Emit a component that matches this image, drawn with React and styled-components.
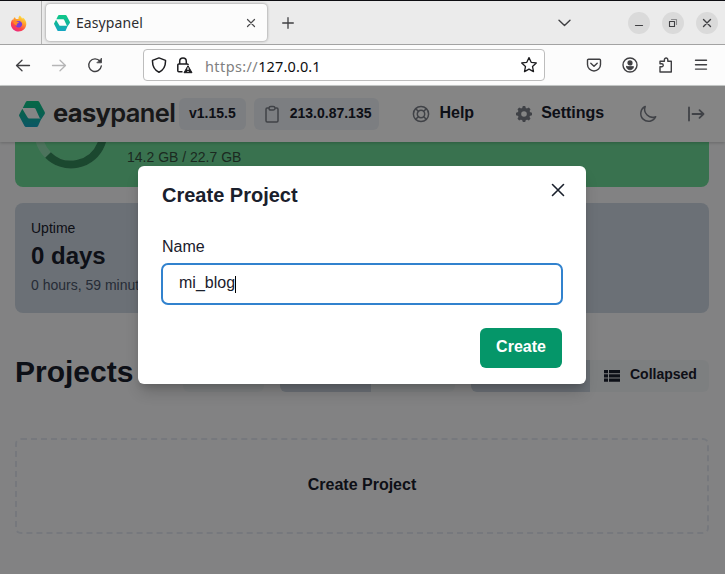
import React from "react";
import styled, { createGlobalStyle } from "styled-components";

const Global = createGlobalStyle`
  *, *::before, *::after { box-sizing: border-box; }
  body { margin: 0; overflow: hidden; background: #f9fafb; }
  p, h1, h2 { margin: 0; }
  svg { display: block; flex: none; }
  button { border: 0; padding: 0; margin: 0; background: none; font: inherit; color: inherit; }
`;

const Window = styled.div`
  width: 725px;
  height: 574px;
  display: flex;
  flex-direction: column;
  overflow: hidden;
  font-family: "Liberation Sans", Arial, sans-serif;
  color: #1a202c;
`;

/* ---------- browser chrome ---------- */
const TabStrip = styled.div`
  height: 45px;
  flex: none;
  display: flex;
  align-items: center;
  background: #ebebeb;
  border-top: 1px solid #0d0d12;
  border-bottom: 1px solid #a3a3a3;
  font-family: "Noto Sans", "Open Sans", sans-serif;
  color: #3b3b3d;
`;
const PinnedTab = styled.div`
  width: 42px;
  height: 43px;
  padding: 2px 0 0 10px;
  display: flex;
  align-items: center;
  border-right: 1px solid #b4b4b4;
`;
const Tab = styled.div`
  width: 221px;
  height: 37px;
  margin-left: 4px;
  padding: 0 9px 0 8px;
  display: flex;
  align-items: center;
  background: #fcfcfc;
  border-radius: 4px;
  box-shadow: 0 0 3px rgba(0, 0, 0, 0.45);
`;
const TabTitle = styled.span`
  flex: 1;
  margin-left: 6px;
  padding-top: 1px;
  font-size: 14px;
  line-height: 20px;
  letter-spacing: 0.08px;
  color: #2e2e31;
`;
const NewTab = styled.button`
  margin-left: 15px;
`;
const WindowControls = styled.div`
  margin-left: auto;
  margin-right: 7px;
  display: flex;
  align-items: center;
  gap: 12px;
`;
const TabsMenu = styled.div`
  margin-right: 45px;
`;
const RoundControl = styled.button`
  width: 22px;
  height: 22px;
  border-radius: 50%;
  background: #dadada;
  display: grid;
  place-items: center;
`;
const Toolbar = styled.div`
  height: 41px;
  flex: none;
  display: flex;
  align-items: center;
  padding: 0 17px 0 15px;
  background: #fcfcfc;
  border-bottom: 1px solid #c9cccb;
`;
const NavButtons = styled.div`
  display: flex;
  gap: 20px;
  width: 128px;
`;
const UrlBar = styled.div`
  width: 402px;
  height: 32px;
  display: flex;
  align-items: center;
  padding: 0 6px 0 7px;
  border: 1px solid #bdbdbd;
  border-radius: 4px;
  background: #fff;
`;
const SecurityIcons = styled.div`
  display: flex;
  align-items: center;
  gap: 8px;
`;
const UrlText = styled.span`
  flex: 1;
  margin-left: 11px;
  padding-top: 1px;
  font-family: "Noto Sans", "Open Sans", sans-serif;
  font-size: 14.5px;
  line-height: 20px;
  letter-spacing: 0.13px;
  color: #0c0c0e;
`;
const UrlScheme = styled.span`
  color: #7f7f81;
  letter-spacing: 0.4px;
`;
const ToolbarActions = styled.div`
  margin-left: auto;
  display: flex;
  align-items: center;
  gap: 20px;
`;

/* ---------- page ---------- */
const Viewport = styled.div`
  position: relative;
  flex: 1;
  min-height: 0;
  display: flex;
  flex-direction: column;
  background: #f9fafb;
`;
const AppHeader = styled.header`
  position: relative;
  z-index: 1;
  height: 56px;
  flex: none;
  display: flex;
  align-items: center;
  padding: 0 19px;
  background: #fff;
  box-shadow: 0 1px 3px rgba(0, 0, 0, 0.2);
`;
const Wordmark = styled.span`
  width: 126px;
  padding-left: 8px;
  margin-top: -2px;
  font-family: Inter, sans-serif;
  font-size: 25.5px;
  line-height: 32px;
  font-weight: 700;
  letter-spacing: -0.65px;
  white-space: nowrap;
  color: #2e2e30;
`;
const WordmarkLight = styled.span`
  font-weight: 600;
`;
const Pill = styled.div`
  height: 32px;
  margin-left: ${(p) => p.$gap}px;
  padding: 0 ${(p) => p.$right}px 2px 10px;
  display: flex;
  align-items: center;
  gap: 10px;
  border-radius: 6px;
  background: #edf2f7;
  font-size: 14px;
  font-weight: 700;
  white-space: nowrap;
  svg { margin-top: 2px; }
`;
const HeaderLink = styled.a`
  margin-left: ${(p) => p.$gap}px;
  padding-bottom: 2px;
  display: flex;
  align-items: center;
  gap: 9px;
  font-size: 16px;
  font-weight: 700;
  svg { margin-top: 2px; }
`;
const HeaderIcon = styled.button`
  margin-left: ${(p) => p.$gap}px;
`;
const Content = styled.main`
  padding: 0 16px 0 15px;
  display: flex;
  flex-direction: column;
`;
const UsageCard = styled.section`
  height: 45px;
  display: flex;
  padding-left: 20px;
  border-radius: 0 0 8px 8px;
  background: #6ddb97;
  overflow: hidden;
`;
const UsageText = styled.p`
  margin: 7px 0 0 20px;
  font-size: 14px;
  line-height: 16px;
  color: #35503f;
`;
const UptimeCard = styled.section`
  height: 110px;
  margin-top: 16px;
  padding: 17px 16px;
  border-radius: 8px;
  background: #cdd7e3;
`;
const StatLabel = styled.p`
  font-size: 14px;
  line-height: 17px;
`;
const StatValue = styled.p`
  margin-top: 2px;
  font-size: 24px;
  line-height: 34px;
  font-weight: 700;
`;
const StatHelp = styled.p`
  margin-top: 4px;
  font-size: 14px;
  line-height: 16px;
  color: #4a5568;
`;
const ProjectsBar = styled.div`
  height: 32px;
  margin-top: 47px;
  display: flex;
  align-items: center;
`;
const Heading = styled.h1`
  width: 168px;
  padding-bottom: 8px;
  font-size: 30px;
  line-height: 36px;
`;
const ButtonGroup = styled.div`
  margin-right: ${(p) => p.$gap || 0}px;
  display: flex;
  border-radius: 6px;
  overflow: hidden;
`;
const ToolButton = styled.button`
  width: ${(p) => p.$width}px;
  height: 32px;
  padding-left: 14px;
  display: flex;
  align-items: center;
  gap: 10px;
  background: ${(p) => (p.$active ? "#cbd5e0" : "#f0f3f6")};
  font-size: 14px;
  font-weight: 700;
`;
const ButtonLabel = styled.span`
  padding-bottom: 4px;
`;
const EmptyProjects = styled.div`
  height: 96px;
  margin-top: 46px;
  padding-bottom: 3px;
  display: grid;
  place-items: center;
  border: 2px dashed #e2e6f0;
  border-radius: 6px;
  font-size: 16px;
  font-weight: 700;
`;

/* ---------- dialog ---------- */
const Overlay = styled.div`
  position: absolute;
  inset: 0;
  z-index: 2;
  display: flex;
  justify-content: center;
  align-items: flex-start;
  padding: 80px 1px 0 0;
  background: rgba(0, 0, 0, 0.48);
`;
const Dialog = styled.div`
  width: 448px;
  height: 218px;
  display: flex;
  flex-direction: column;
  padding: 14px 24px 16px;
  border-radius: 6px;
  background: #fff;
  box-shadow: 0 10px 15px -3px rgba(0, 0, 0, 0.2), 0 4px 6px -2px rgba(0, 0, 0, 0.12);
`;
const DialogHeader = styled.div`
  display: flex;
  justify-content: space-between;
  margin-right: -3px;
`;
const DialogTitle = styled.h2`
  font-size: 20px;
  line-height: 30px;
`;
const Field = styled.label`
  margin-top: 25px;
  font-size: 16px;
  line-height: 23px;
`;
const Input = styled.div`
  width: 402px;
  height: 42px;
  margin: 5px -1px 0;
  padding: 0 16px 3px;
  display: flex;
  align-items: center;
  border: 2px solid #3182ce;
  border-radius: 7px;
  font-size: 16px;
`;
const Caret = styled.span`
  width: 1px;
  height: 17px;
  margin-top: 4px;
  background: #000;
`;
const SubmitButton = styled.button`
  align-self: flex-end;
  flex: none;
  width: 82px;
  height: 40px;
  margin-top: 23px;
  padding-bottom: 3px;
  border-radius: 6px;
  background: #059669;
  color: #fff;
  font-size: 16px;
  font-weight: 700;
`;

/* ---------- icons ---------- */
const Icon = ({ w = 16, h = w, color = "#3f3f42", sw = 1.3, children }) => (
  <svg width={w} height={h} viewBox={`0 0 ${w} ${h}`} fill="none" stroke={color} strokeWidth={sw} strokeLinecap="round" strokeLinejoin="round">
    {children}
  </svg>
);

const FirefoxLogo = () => (
  <svg width="17" height="17" viewBox="0 0 17 17">
    <defs>
      <linearGradient id="fox" x1="0.8" y1="0" x2="0.25" y2="1">
        <stop offset="0" stopColor="#fff04a" />
        <stop offset="0.35" stopColor="#ffa62b" />
        <stop offset="0.7" stopColor="#ff4545" />
        <stop offset="1" stopColor="#e8248a" />
      </linearGradient>
    </defs>
    <path d="M9.8.5C11 1.4 11.7 2.6 12 3.6c.6-.2.7-.7.8-1.200C15 4 16.500 6.300 16.300 9.300 16 13.500 12.700 16.500 8.600 16.500S.9 13.300.9 9.200c0-2.100.6-3.700 1.600-5 .1.500.3.900.6 1.200C3.200 4 3.900 2.700 5 2c0 .8.300 1.500 1 2 1-.1 1.800-.1 2.500.1C8.400 2.700 8.800 1.400 9.800.5z" fill="url(#fox)" />
    <path d="M5 7.500c1.200-1.500 3.200-2 5-1.200 1.800.7 2.600 2.600 1.900 4.300-.7 1.600-2.500 2.300-4 1.900C6 12 5 10.200 5.300 8.700l2.300-.4z" fill="#7a3bd8" />
    <path d="M3.200 6.500c1.400-.9 3-.6 4.200.3l1.600.3c-.2.900-1 1.200-1.700 1.500-.7.400-.8 1.300 0 1.700-1.700.5-3.600-1-4.100-3.800z" fill="#ff8a24" />
  </svg>
);

const PanelLogo = ({ size, id }) => (
  <svg width={size} height={size} viewBox="0 0 26 26">
    <defs>
      <linearGradient id={id} x1="0" y1="0" x2="0" y2="26" gradientUnits="userSpaceOnUse">
        <stop offset="0" stopColor="#0fc888" />
        <stop offset="0.45" stopColor="#10b996" />
        <stop offset="1" stopColor="#15a6c4" />
      </linearGradient>
    </defs>
    <path fill={`url(#${id})`} d="M8.200 0h10.600q1 0 1.500.9l5.400 10.200q.4.900 0 1.800l-3.500 5.300L20.700 17l-4.100-8.900q-.5-1-1.500-1H3.800l3-6.200Q7.300 0 8.200 0z" />
    <path fill={`url(#${id})`} d="M3.300 7.800 8.600 16.600q.5.900 1.500.9h12.300l-3.300 7.600q-.5.900-1.500.9H7q-1 0-1.500-.9L.3 15.200q-.5-.9 0-1.800z" />
  </svg>
);

const gearTeeth = [0, 45, 90, 135, 180, 225, 270, 315];

const GearIcon = () => (
  <svg width="16" height="16" viewBox="0 0 16 16" fill="#7b7f88">
    {gearTeeth.map((a) => (
      <path key={a} d="M6 2.500 6.800 0h2.400l.8 2.500z" transform={`rotate(${a} 8 8)`} />
    ))}
    <path fillRule="evenodd" d="M8 1.700a6.300 6.300 0 1 0 0 12.600A6.300 6.300 0 0 0 8 1.700zm0 3.500a2.800 2.800 0 1 1 0 5.600 2.800 2.800 0 0 1 0-5.600z" />
  </svg>
);

const UsageRing = () => (
  <svg width="72" height="45" viewBox="0 0 72 45" fill="none" strokeWidth="8">
    <circle cx="36" cy="-10" r="32.500" stroke="#92dcb0" />
    <path d="M36-42.500a32.500 32.500 0 1 1-23 55.500" stroke="#348a5b" />
  </svg>
);

const LockWarning = () => (
  <svg width="18" height="17" viewBox="0 0 18 17" fill="none">
    <path d="M3.700 7V4.400a3.300 3.300 0 0 1 6.600 0V7" stroke="#1d1d20" strokeWidth="1.500" />
    <path d="M6.500 14.700H2.800a1 1 0 0 1-1-1V8a1 1 0 0 1 1-1h8.400a1 1 0 0 1 1 1" stroke="#1d1d20" strokeWidth="1.500" />
    <path d="M12 8.700l4 7H8z" fill="#1d1d20" stroke="#1d1d20" strokeLinejoin="round" />
    <path d="M12 10.500v2.500M12 13.900v1.200" stroke="#fff" strokeWidth="1.200" />
  </svg>
);

export default function App() {
  return (
    <>
      <Global />
      <Window>
        <TabStrip>
          <PinnedTab><FirefoxLogo /></PinnedTab>
          <Tab>
            <PanelLogo size={16} id="tab-logo" />
            <TabTitle>Easypanel</TabTitle>
            <Icon w={14} color="#4a4a4c" sw={1.2}><path d="M3.500 3.500l7 7m0-7l-7 7" /></Icon>
          </Tab>
          <NewTab><Icon w={12} sw={1.3}><path d="M6 .7v10.600M.7 6h10.600" /></Icon></NewTab>
          <WindowControls>
            <TabsMenu><Icon w={13} h={8} sw={1.4}><path d="M1 1.200l5.500 5.400L12 1.200" /></Icon></TabsMenu>
            <RoundControl><Icon w={10} sw={1.2}><path d="M1.500 7.500h7" /></Icon></RoundControl>
            <RoundControl><Icon w={10} sw={1.1}><path d="M1.500 3.500h5v5h-5z" /><path d="M3.500 1.500h5v5" stroke="#8b8b8d" /></Icon></RoundControl>
            <RoundControl><Icon w={10} sw={1.4}><path d="M1.500 1.500l7 7m0-7l-7 7" /></Icon></RoundControl>
          </WindowControls>
        </TabStrip>

        <Toolbar>
          <NavButtons>
            <Icon><path d="M14.500 8.500h-13M7 3.300L1.500 8.500 7 13.700" /></Icon>
            <Icon color="#b5b5b6"><path d="M1.500 8.500h13M9 3.300L14.500 8.500 9 13.700" /></Icon>
            <Icon sw={1.4}><path d="M13 4.300A6.300 6.300 0 1 0 14.300 9" /><path d="M14.500 1.500v4.300h-4.300z" fill="#3f3f42" strokeWidth=".8" /></Icon>
          </NavButtons>
          <UrlBar>
            <SecurityIcons>
              <Icon w={17} h={16} color="#1d1d20" sw={1.5}><path d="M8 .9l6.500 2.500c.2 4.800-1.500 9.400-6.500 11.800C3 12.800 1.300 8.200 1.500 3.400z" /></Icon>
              <LockWarning />
            </SecurityIcons>
            <UrlText><UrlScheme>https://</UrlScheme>127.0.0.1</UrlText>
            <Icon w={18} color="#1d1d20" sw={1.3}><path d="M9 1.600l2.200 4.700 5.100.6-3.800 3.500 1 5.200L9 13.100l-4.500 2.500 1-5.200L1.700 6.900l5.100-.6z" /></Icon>
          </UrlBar>
          <ToolbarActions>
            <Icon w={16} sw={1.4}><path d="M2.500 2.200h11a1 1 0 0 1 1 1v4.300a6.500 6.500 0 0 1-13 0V3.200a1 1 0 0 1 1-1z" /><path d="M4.800 6.200L8 9.300l3.200-3.100" /></Icon>
            <Icon w={16} sw={1.4}><circle cx="8" cy="8" r="7" /><circle cx="8" cy="5.900" r="1.900" fill="#3f3f42" /><path d="M4.500 9.600h7c0 2-1.500 3.200-3.500 3.200S4.500 11.600 4.500 9.600z" fill="#3f3f42" strokeWidth=".8" /></Icon>
            <Icon w={16} sw={1.4}><path d="M2 9.800V15h11.300V4.300H9.800V2.700a1.700 1.700 0 0 0-3.400 0v1.600H2v2.400h1.700a1.550 1.550 0 0 1 0 3.100z" /></Icon>
            <Icon w={14} h={12} sw={1.4}><path d="M1.500 1.300h11M1.500 5.700h11M1.500 10.100h11" /></Icon>
          </ToolbarActions>
        </Toolbar>

        <Viewport>
          <AppHeader>
            <PanelLogo size={26} id="header-logo" />
            <Wordmark>easy<WordmarkLight>panel</WordmarkLight></Wordmark>
            <Pill $gap={8} $right={10}>v1.15.5</Pill>
            <Pill $gap={8} $right={8}>
              <Icon w={16} h={18} color="#7b7f88" sw={1.5}><path d="M5 3H3.200A1.200 1.200 0 0 0 2 4.200v11.600A1.200 1.200 0 0 0 3.200 17h9.600a1.200 1.200 0 0 0 1.200-1.200V4.200A1.200 1.200 0 0 0 12.800 3H11M5 3.200a1.800 1.800 0 0 1 1.800-1.700h2.400A1.800 1.800 0 0 1 11 3.200a1.800 1.800 0 0 1-1.800 1.800H6.800A1.800 1.800 0 0 1 5 3.200z" /></Icon>
              213.0.87.135
            </Pill>
            <HeaderLink $gap={33}>
              <Icon w={18} color="#7b7f88" sw={1.5}><circle cx="9" cy="9" r="7.600" /><circle cx="9" cy="9" r="3.700" /><path d="M3.700 3.700l2.600 2.600M11.700 11.700l2.600 2.600M14.300 3.700l-2.600 2.600M6.300 11.700l-2.600 2.600" /></Icon>
              Help
            </HeaderLink>
            <HeaderLink $gap={42}><GearIcon />Settings</HeaderLink>
            <HeaderIcon $gap={35}>
              <Icon w={18} color="#7b7f88" sw={1.5}><path d="M6.200 1.500a7.800 7.800 0 1 0 10.500 10.200A8 8 0 0 1 6.200 1.500z" /></Icon>
            </HeaderIcon>
            <HeaderIcon $gap={30}>
              <Icon w={18} color="#7b7f88" sw={1.8}><path d="M2 2.500v13M5.500 9H16.500M12.500 5.200L16.500 9l-4 3.800" /></Icon>
            </HeaderIcon>
          </AppHeader>

          <Content>
            <UsageCard>
              <UsageRing />
              <UsageText>14.2 GB / 22.7 GB</UsageText>
            </UsageCard>
            <UptimeCard>
              <StatLabel>Uptime</StatLabel>
              <StatValue>0 days</StatValue>
              <StatHelp>0 hours, 59 minutes</StatHelp>
            </UptimeCard>
            <ProjectsBar>
              <Heading>Projects</Heading>
              <ButtonGroup $gap={16}><ToolButton $width={81} /></ButtonGroup>
              <ButtonGroup $gap={16}><ToolButton $width={91} $active /><ToolButton $width={84} /></ButtonGroup>
              <ButtonGroup>
                <ToolButton $width={119} $active />
                <ToolButton $width={119}>
                  <svg width="16" height="12" viewBox="0 0 16 12" fill="#1a202c">
                    <path d="M0 0h4v3.200H0zM5 0h11v3.200H5zM0 4.300h4v3.200H0zM5 4.300h11v3.200H5zM0 8.600h4v3.200H0zM5 8.600h11v3.200H5z" />
                  </svg>
                  <ButtonLabel>Collapsed</ButtonLabel>
                </ToolButton>
              </ButtonGroup>
            </ProjectsBar>
            <EmptyProjects>Create Project</EmptyProjects>
          </Content>

          <Overlay>
            <Dialog>
              <DialogHeader>
                <DialogTitle>Create Project</DialogTitle>
                <Icon w={14} h={20} color="#1a202c" sw={1.6}><path d="M1.500 4.500l11 11M12.500 4.500l-11 11" /></Icon>
              </DialogHeader>
              <Field>Name</Field>
              <Input>mi_blog<Caret /></Input>
              <SubmitButton>Create</SubmitButton>
            </Dialog>
          </Overlay>
        </Viewport>
      </Window>
    </>
  );
}
